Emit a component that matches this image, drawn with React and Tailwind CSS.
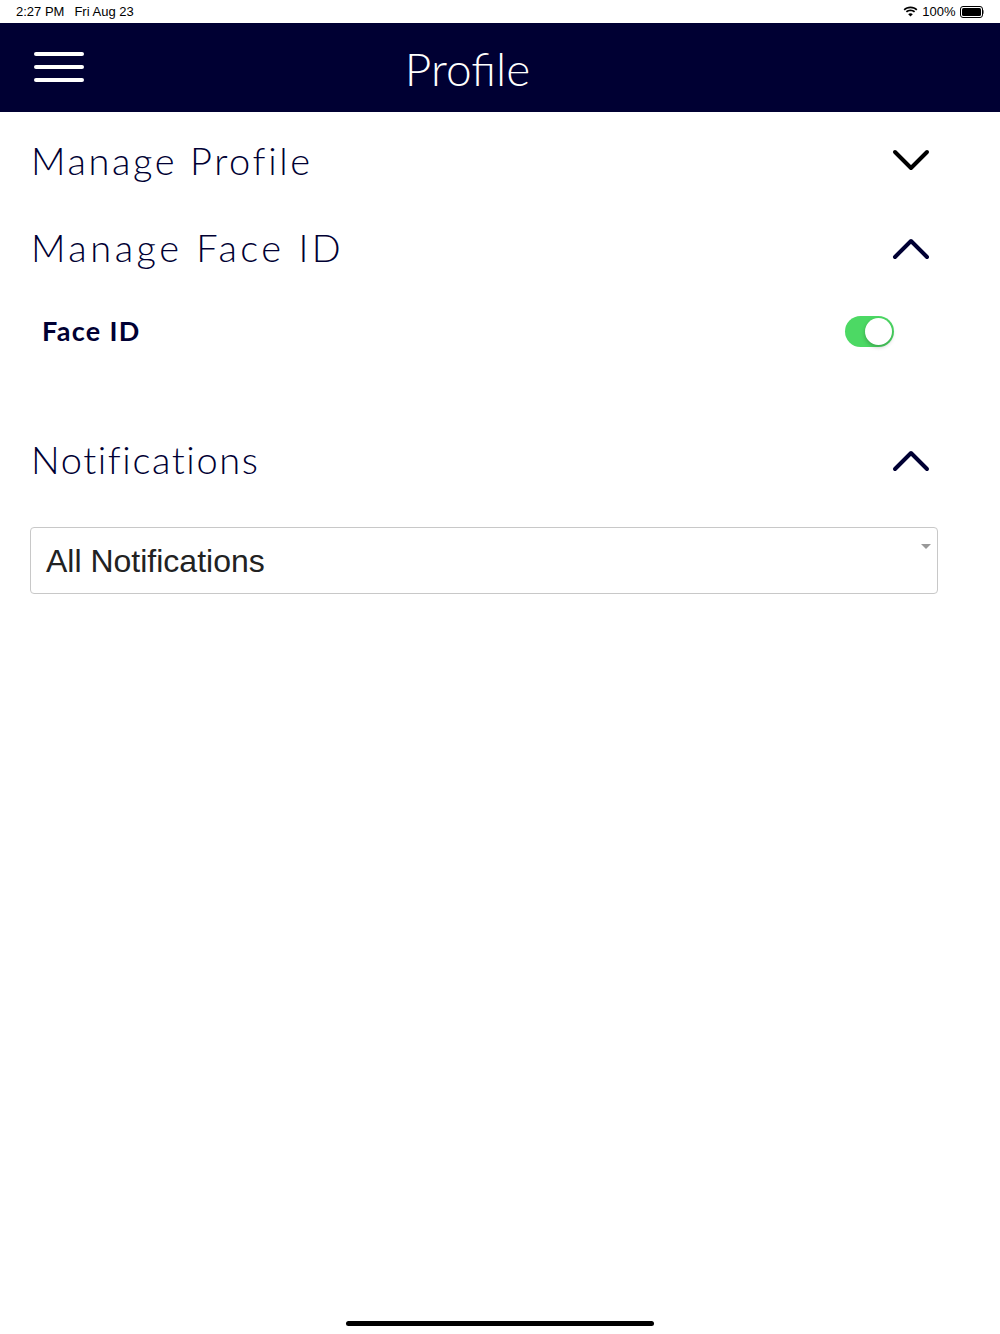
import React from "react";

const Chevron = ({ up, color }) => (
  <svg width="38" height="24" viewBox="0 0 38 24" fill="none">
    <path
      d={up ? "M3 21 L19 5 L35 21" : "M3 3 L19 19 L35 3"}
      stroke={color}
      strokeWidth="4"
      strokeLinecap="round"
      strokeLinejoin="round"
    />
  </svg>
);

const SectionHeader = ({ title, up, color, tracking }) => (
  <div className="flex items-center justify-between h-[89px] pl-[31px] pr-[70px]">
    <h2 className={`text-[38px] text-[#000033] font-light ${tracking}`} style={{ fontFamily: "Lato, 'Noto Sans', sans-serif" }}>
      {title}
    </h2>
    <Chevron up={up} color={color} />
  </div>
);

export default function App() {
  return (
    <div className="relative w-[1000px] h-[1334px] bg-white overflow-hidden" style={{ fontFamily: "Lato, sans-serif" }}>
      {/* Status bar */}
      <div className="flex items-center justify-between h-[23px] px-4 text-[13px] text-black" style={{ fontFamily: "'Liberation Sans', Arial, sans-serif" }}>
        <div className="flex gap-[10px]">
          <span>2:27 PM</span>
          <span>Fri Aug 23</span>
        </div>
        <div className="flex items-center gap-1">
          <svg width="15" height="11" viewBox="0 0 15 11">
            <path d="M7.5 2.2c2.2 0 4.2.8 5.7 2.2l1.2-1.2C12.6 1.5 10.2.5 7.5.5S2.4 1.5.6 3.2l1.2 1.2C3.3 3 5.3 2.2 7.5 2.2z" fill="#000" />
            <path d="M7.5 5.2c1.3 0 2.5.5 3.5 1.3l1.2-1.2C10.9 4.2 9.3 3.5 7.5 3.5S4.1 4.2 2.8 5.3L4 6.5c1-.8 2.2-1.3 3.5-1.3z" fill="#000" />
            <path d="M7.5 10.5L9.8 8.2C9.2 7.6 8.4 7.3 7.5 7.3S5.8 7.6 5.2 8.2z" fill="#000" />
          </svg>
          <span>100%</span>
          <div className="flex items-center">
            <div className="w-[23px] h-[12px] rounded-[3px] border border-black p-[1px]">
              <div className="w-full h-full rounded-[1.5px] bg-black" />
            </div>
            <div className="w-[1.5px] h-[4px] bg-black/50 rounded-r-sm" />
          </div>
        </div>
      </div>

      {/* Header */}
      <div className="relative flex items-center justify-center h-[89px] bg-[#000033]">
        <div className="absolute left-[34px] top-[29px] flex flex-col gap-[9px]">
          <div className="w-[50px] h-[4px] rounded-full bg-white" />
          <div className="w-[50px] h-[4px] rounded-full bg-white" />
          <div className="w-[50px] h-[4px] rounded-full bg-white" />
        </div>
        <h1 className="ml-[-65px] mt-[2px] text-[46px] text-white font-light" style={{ fontFamily: "Lato, sans-serif" }}>
          Profile
        </h1>
      </div>

      <div className="h-[4px]" />

      {/* Manage Profile */}
      <SectionHeader title="Manage Profile" up={false} color="#000000" tracking="tracking-[2.6px]" />
      <div className="-mt-[2px]" />

      {/* Manage Face ID */}
      <div className="-mt-[2px]">
        <SectionHeader title="Manage Face ID" up={true} color="#000033" tracking="tracking-[3.5px]" />
      </div>
      <div className="flex items-center justify-between h-[70px] mt-[4px] pl-[42px] pr-[106px]">
        <span className="text-[27px] font-bold tracking-[1.3px] text-[#000033]" style={{ fontFamily: "Lato, sans-serif" }}>
          Face ID
        </span>
        <div className="relative w-[49px] h-[31px] rounded-full bg-[#4cd964]">
          <div className="absolute right-[2px] top-[2px] w-[27px] h-[27px] rounded-full bg-white shadow-[0_2px_4px_rgba(0,0,0,0.25)]" />
        </div>
      </div>

      <div className="h-[49px]" />

      {/* Notifications */}
      <SectionHeader title="Notifications" up={true} color="#000033" tracking="tracking-[1.6px]" />
      <div className="pl-[30px] pr-[62px] pt-[23px]">
        <div className="relative flex items-center h-[67px] border border-[#c8c8c8] rounded-[4px] pl-[15px]">
          <span className="text-[32px] text-[#222]" style={{ fontFamily: "'Liberation Sans', Arial, sans-serif" }}>
            All Notifications
          </span>
          <div className="absolute right-[6px] top-[16px] w-0 h-0 border-l-[5px] border-r-[5px] border-t-[5px] border-l-transparent border-r-transparent border-t-[#999]" />
        </div>
      </div>

      {/* Home indicator */}
      <div className="absolute bottom-[8px] left-[346px] w-[308px] h-[5px] rounded-full bg-black" />
    </div>
  );
}
